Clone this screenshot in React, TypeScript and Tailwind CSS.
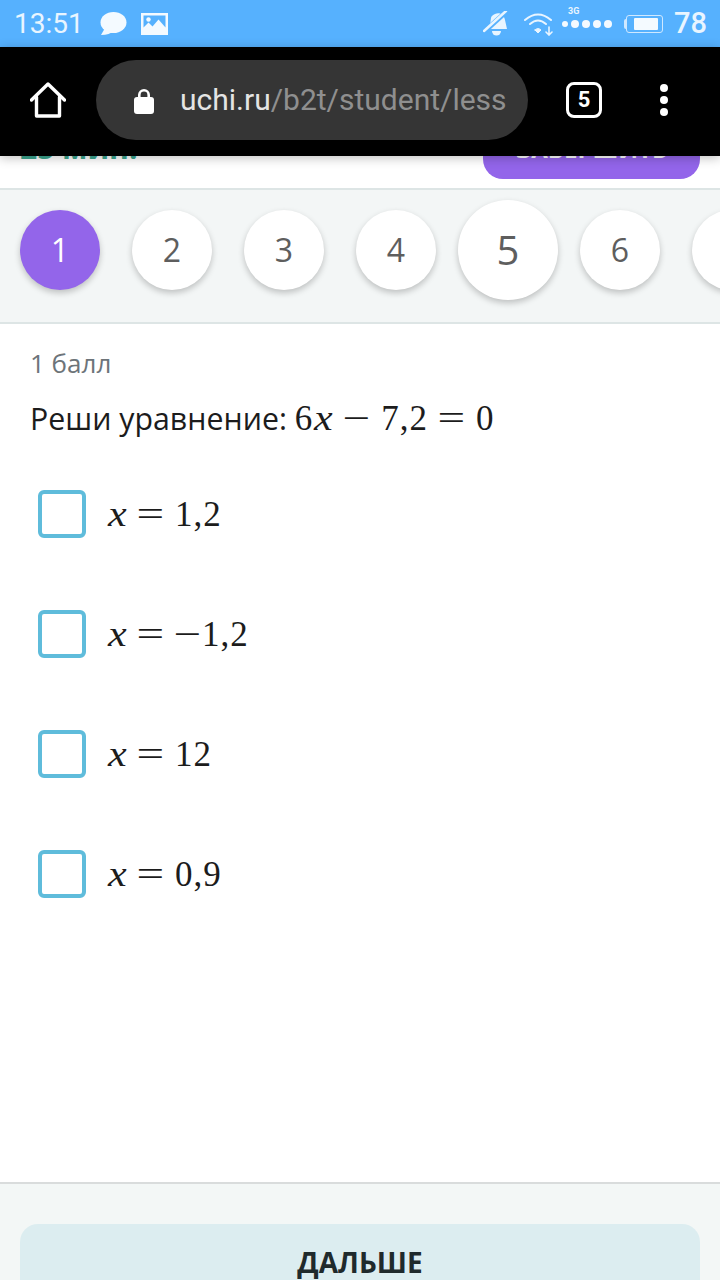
import React from "react";

const steps = [1, 2, 3, 4, 5, 6, 7];
const answers = [
  { id: "a", negative: false, value: "1,2" },
  { id: "b", negative: true, value: "1,2" },
  { id: "c", negative: false, value: "12" },
  { id: "d", negative: false, value: "0,9" },
];

function StatusBar() {
  return (
    <div className="h-[47px] shrink-0 bg-[#56b1fe] flex items-center pl-[14px] pr-[13px] text-[#e9f5ff] font-['Roboto',sans-serif]">
      <span className="text-[28px] leading-none">13:51</span>
      {/* chat bubble */}
      <svg className="ml-[15px]" width="28" height="26" viewBox="0 0 28 26" fill="#f4faff">
        <ellipse cx="14.5" cy="11.5" rx="13" ry="10.5" />
        <path d="M6 17 L2 24 Q11 24 14 20 Z" />
      </svg>
      {/* gallery */}
      <svg className="ml-[14px]" width="27" height="22" viewBox="0 0 27 22">
        <path fill="#f4faff" fillRule="evenodd" d="M0 0h27v22H0z M2.5 2.5v12l5-5 4 4 6-7 7 8V2.5z" />
        <circle cx="7.5" cy="6.5" r="2.2" fill="#f4faff" />
      </svg>
      <div className="flex-1" />
      {/* muted bell */}
      <svg className="-mr-[3px]" width="26" height="26" viewBox="0 0 26 26" fill="#e9f5ff">
        <path d="M12 3c5-2 9 1 10 6l2 9H3l4-4 1-7c0-2 2-3 4-4z" />
        <path d="M9 20h9a4.5 4.5 0 0 1-9 0z" />
        <path d="M1 21 L23 1" stroke="#56b1fe" strokeWidth="5" />
        <path d="M1 20 L23 0" stroke="#e9f5ff" strokeWidth="2.5" strokeLinecap="round" />
      </svg>
      {/* wifi with download arrow */}
      <svg className="ml-[18px]" width="30" height="24" viewBox="0 0 30 24" fill="none" stroke="#e9f5ff" strokeLinecap="round">
        <path d="M1 8 Q14 -3 27 8" strokeWidth="2" />
        <path d="M6 12 Q14 5 22 12" strokeWidth="2" />
        <path d="M11 18 L14 21 L17 18 Q14 15 11 18 Z" fill="#e9f5ff" strokeWidth="1" />
        <path d="M25 15 V22 M22 20 L25 23 L28 20" strokeWidth="1.6" />
      </svg>
      {/* signal dots */}
      <div className="ml-[8px] relative flex items-center gap-[3px] mt-[1px]">
        <span className="absolute -top-[13px] left-[6px] text-[9px] leading-none font-bold">3G</span>
        <span className="w-[6px] h-[6px] rounded-full bg-[#f4faff]" />
        <span className="w-[8px] h-[8px] rounded-full bg-[#f4faff]" />
        <span className="w-[8px] h-[8px] rounded-full bg-[#f4faff]" />
        <span className="w-[8px] h-[8px] rounded-full bg-[#f4faff]" />
        <span className="w-[8px] h-[8px] rounded-full bg-[#f4faff]" />
      </div>
      {/* battery */}
      <div className="ml-[12px] flex items-center">
        <div className="w-[2px] h-[10px] bg-[#cfe8ff] rounded-l-sm" />
        <div className="w-[37px] h-[18px] rounded-[3px] border border-[#cfe8ff] p-[2px] pl-[7px]">
          <div className="h-full w-[24px] bg-[#f4faff] rounded-[1px]" />
        </div>
      </div>
      <span className="ml-[11px] text-[29px] leading-none font-medium">78</span>
    </div>
  );
}

function BrowserBar() {
  return (
    <div className="relative z-10 h-[109px] shrink-0 bg-black flex items-start shadow-[0_2px_10px_rgba(0,0,0,0.25)] font-['Roboto',sans-serif]">
      <div className="w-[96px] h-[106px] flex items-center justify-center">
        <svg width="36" height="36" viewBox="0 0 36 36" fill="none" stroke="white" strokeWidth="3.4" strokeLinejoin="round" strokeLinecap="round">
          <path d="M1.5 18 L18 2 L34.5 18" />
          <path d="M6.5 15 V34 H29.5 V15" />
        </svg>
      </div>
      <div className="mt-[13px] w-[432px] h-[80px] rounded-full bg-[#353535] flex items-center pl-[37px] overflow-hidden">
        <svg width="22" height="27" viewBox="0 0 22 27" fill="white">
          <path d="M5 11V8a6 6 0 0 1 12 0v3h-2.6V8a3.4 3.4 0 0 0-6.8 0v3z" />
          <rect x="1" y="10" width="20" height="17" rx="3" />
        </svg>
        <span className="ml-[25px] text-[30px] leading-none whitespace-nowrap text-[#8f8f8f]">
          <span className="text-[#e4e4e4]">uchi.ru</span>/b2t/student/less
        </span>
      </div>
      <div className="ml-[38px] mt-[35px] w-[36px] h-[36px] rounded-[8px] border-[3.5px] border-white flex items-center justify-center">
        <span className="text-white text-[22px] font-bold leading-none">5</span>
      </div>
      <div className="ml-[58px] mt-[37px] flex flex-col gap-[4px]">
        <span className="w-[8px] h-[8px] rounded-full bg-white" />
        <span className="w-[8px] h-[8px] rounded-full bg-white" />
        <span className="w-[8px] h-[8px] rounded-full bg-white" />
      </div>
    </div>
  );
}

// Italic variable, widened to the proportions of a math font
function MathVar() {
  return <i className="inline-block w-[19px] ml-[1px] origin-left scale-x-[1.2]">x</i>;
}

// Binary operator glyph, stretched horizontally so the bars stay thin
function MathOp({ sign, spaced = true }: { sign: string; spaced?: boolean }) {
  return (
    <span
      className={
        spaced
          ? "inline-block w-[26px] mx-[11px] text-center scale-x-[1.4]"
          : "inline-block w-[26px] mr-[1px] text-center scale-x-[1.4]"
      }
    >
      {sign}
    </span>
  );
}

function Formula({ children }: { children: React.ReactNode }) {
  return (
    <span className="text-[35px] leading-none tracking-[1px] whitespace-nowrap font-['Liberation_Serif',serif] text-[#1c1c1c]">
      {children}
    </span>
  );
}

function App() {
  return (
    <div className="w-[720px] h-[1280px] overflow-hidden flex flex-col bg-white font-['Open_Sans',sans-serif]">
      <StatusBar />
      <BrowserBar />

      {/* lesson header, scrolled mostly under the browser bar */}
      <div className="h-[32px] shrink-0 flex justify-between items-end px-[20px] pb-[9px]">
        <span className="text-[#3ba58e] text-[30px] leading-none font-bold mb-[16px]">25 мин.</span>
        <div className="w-[217px] h-[60px] shrink-0 rounded-[20px] bg-[#9365ea] flex items-end justify-center pb-[18px]">
          <span className="text-white text-[24px] font-bold leading-none">ЗАВЕРШИТЬ</span>
        </div>
      </div>

      {/* question numbers */}
      <div className="h-[136px] shrink-0 bg-[#f3f6f6] border-y-2 border-[#dde5e5] flex items-center gap-8 pl-[20px] pb-[12px] overflow-hidden">
        {steps.map((n) =>
          n === 5 ? (
            <div
              key={n}
              className="w-[100px] h-[100px] -mx-[10px] shrink-0 rounded-full bg-white shadow-[0_3px_6px_rgba(0,0,0,0.22)] flex items-center justify-center text-[40px] text-[#5e5e5e]"
            >
              {n}
            </div>
          ) : (
            <div
              key={n}
              className={
                n === 1
                  ? "w-[80px] h-[80px] shrink-0 rounded-full bg-[#9365ea] shadow-[0_3px_6px_rgba(0,0,0,0.22)] flex items-center justify-center text-[32px] text-white"
                  : "w-[80px] h-[80px] shrink-0 rounded-full bg-white shadow-[0_3px_6px_rgba(0,0,0,0.22)] flex items-center justify-center text-[32px] text-[#5e5e5e]"
              }
            >
              {n}
            </div>
          )
        )}
      </div>

      {/* task */}
      <div className="flex-1 pl-[30px] pt-[22px]">
        <div className="text-[26px] leading-[34px] text-[#6d7479]">1 балл</div>
        <div className="mt-[17px] text-[30.3px] leading-[44px] text-[#1c1c1c] whitespace-nowrap">
          Реши уравнение:{" "}
          <Formula>
            6
            <MathVar />
            <MathOp sign="−" />
            7,2
            <MathOp sign="=" />0
          </Formula>
        </div>
        <div className="mt-[49px] flex flex-col gap-[72px]">
          {answers.map((answer) => (
            <div key={answer.id} className="flex items-center ml-[8px]">
              <div className="w-[48px] h-[48px] shrink-0 rounded-[6px] border-[4px] border-[#5fbcdb] bg-white" />
              <span className="ml-[21px]">
                <Formula>
                  <MathVar />
                  <MathOp sign="=" />
                  {answer.negative && <MathOp sign="−" spaced={false} />}
                  {answer.value}
                </Formula>
              </span>
            </div>
          ))}
        </div>
      </div>

      {/* footer action */}
      <div className="h-[98px] shrink-0 bg-[#f3f7f6] border-t-2 border-[#d9dcdc] pt-[40px] px-[20px]">
        <div className="h-[80px] rounded-t-[18px] bg-[#dcedf0] flex justify-center pt-[18px]">
          <span className="text-[28px] leading-[40px] font-bold text-[#1f2a2c]">ДАЛЬШЕ</span>
        </div>
      </div>
    </div>
  );
}

export default App;
